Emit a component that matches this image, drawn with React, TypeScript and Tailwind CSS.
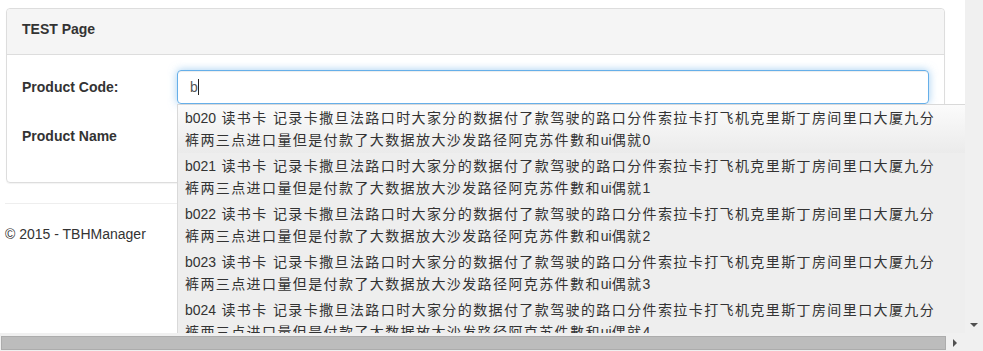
import React from "react";

const items = [0, 1, 2, 3, 4];

function Item({ i }: { i: number }) {
  return (
    <div
      className={
        "px-[7px] pt-[2px] pb-[2px] leading-[22px] whitespace-nowrap " +
        (i === 0 ? "bg-[linear-gradient(to_bottom,#fbfbfb,#ebebeb)]" : "")
      }
    >
      <div>
        <span>b02{i}</span>
        <span className="tracking-[1.4px]"> 读书卡 记录卡撒旦法路口时大家分的数据付了款驾驶的路口分件索拉卡打飞机克里斯丁房间里口大厦九分</span>
      </div>
      <div>
        <span className="tracking-[1.4px]">裤两三点进口量但是付款了大数据放大沙发路径阿克苏件數和</span>
        <span>ui</span>
        <span className="tracking-[1.4px]">偶就</span>
        <span>{i}</span>
      </div>
    </div>
  );
}

export default function App() {
  return (
    <div className="w-[983px] h-[351px] overflow-hidden flex bg-white text-[14px] text-[#333] font-['Liberation_Sans','Noto_Sans_CJK_SC',sans-serif]">
      <div className="w-[965px] h-[351px] flex flex-col">
        <div className="relative h-[333px] overflow-hidden">
          <div className="pl-[5px] pt-[8px]">
            <div className="ml-[1px] w-[939px] border border-[#dddddd] rounded-[4px] shadow-[0_1px_1px_rgba(0,0,0,0.05)]">
              <div className="h-[46px] bg-[#f5f5f5] border-b border-[#dddddd] rounded-t-[4px] px-[15px] pt-[10px] font-bold leading-[20px]">
                TEST Page
              </div>
              <div className="px-[15px] pt-[15px] pb-[29px] flex flex-col gap-[15px]">
                <div className="flex items-center h-[34px]">
                  <div className="w-[155px] font-bold">Product Code:</div>
                  <div className="flex-1 h-[34px] rounded-[4px] border border-[#66afe9] shadow-[inset_0_1px_1px_rgba(0,0,0,0.075),0_0_8px_rgba(102,175,233,0.6)] px-[12px] flex items-center text-[#555]">
                    <span>b</span>
                    <span className="inline-block w-[1px] h-[16px] bg-[#222]" />
                  </div>
                </div>
                <div className="flex items-center h-[34px]">
                  <div className="w-[155px] font-bold">Product Name</div>
                </div>
              </div>
            </div>
            <div className="mt-[20px] w-[940px] border-t border-[#eeeeee]" />
            <div className="mt-[20px] leading-[20px]">© 2015 - TBHManager</div>
          </div>
          <div className="absolute left-[177px] top-[104px] w-[800px] bg-[#eeeeee] border-l border-t border-[#d9d9d9]">
            {items.map((i) => (
              <Item key={i} i={i} />
            ))}
          </div>
        </div>
        <div className="h-[18px] bg-[#f0f0f0] flex items-center pl-[1px] pt-[2px]">
          <div className="w-[945px] h-[14px] bg-[#bcbcbc] border border-[#acacac]" />
          <div className="ml-[7px] w-0 h-0 border-y-[4px] border-y-transparent border-l-[4px] border-l-[#505050]" />
        </div>
      </div>
      <div className="w-[18px] h-[351px] bg-[#f0f0f0] flex flex-col items-center">
        <div className="flex-1" />
        <div className="mb-[24px] w-0 h-0 border-x-[4px] border-x-transparent border-t-[4px] border-t-[#505050]" />
      </div>
    </div>
  );
}
